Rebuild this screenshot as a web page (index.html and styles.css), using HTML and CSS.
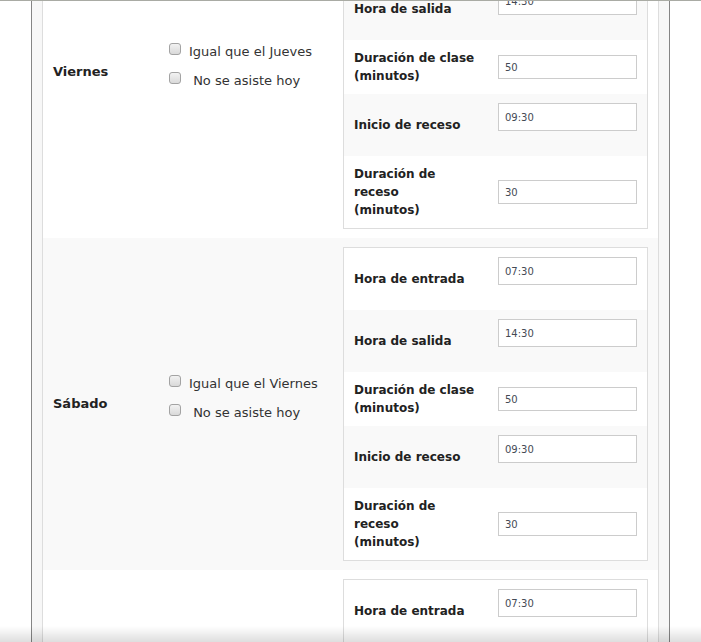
FILE: index.html
```html
<!DOCTYPE html>
<html lang="es">
<head>
<meta charset="utf-8">
<title>Horario</title>
<link rel="stylesheet" href="styles.css">
</head>
<body>
<div class="topline"></div>
<div class="frame">
  <div class="panel">
    <div class="day-row">
      <div class="day-name">Viernes</div>
      <div class="day-opts">
        <label class="chk"><input type="checkbox"><span>Igual que el Jueves</span></label>
        <label class="chk"><input type="checkbox"><span>&nbsp;No se asiste hoy</span></label>
      </div>
      <div class="day-times">
        <div class="times">
          <div class="trow"><div class="tlabel">Hora de entrada</div><div class="tinput"><input class="time" type="text" value="07:30"></div></div>
          <div class="trow alt"><div class="tlabel">Hora de salida</div><div class="tinput"><input class="time" type="text" value="14:30"></div></div>
          <div class="trow"><div class="tlabel">Duración de clase<br>(minutos)</div><div class="tinput"><input class="num" type="text" value="50"></div></div>
          <div class="trow alt"><div class="tlabel">Inicio de receso</div><div class="tinput"><input class="time" type="text" value="09:30"></div></div>
          <div class="trow"><div class="tlabel">Duración de<br>receso<br>(minutos)</div><div class="tinput"><input class="num" type="text" value="30"></div></div>
        </div>
      </div>
    </div>
    <div class="day-row shaded">
      <div class="day-name">Sábado</div>
      <div class="day-opts">
        <label class="chk"><input type="checkbox"><span>Igual que el Viernes</span></label>
        <label class="chk"><input type="checkbox"><span>&nbsp;No se asiste hoy</span></label>
      </div>
      <div class="day-times">
        <div class="times">
          <div class="trow"><div class="tlabel">Hora de entrada</div><div class="tinput"><input class="time" type="text" value="07:30"></div></div>
          <div class="trow alt"><div class="tlabel">Hora de salida</div><div class="tinput"><input class="time" type="text" value="14:30"></div></div>
          <div class="trow"><div class="tlabel">Duración de clase<br>(minutos)</div><div class="tinput"><input class="num" type="text" value="50"></div></div>
          <div class="trow alt"><div class="tlabel">Inicio de receso</div><div class="tinput"><input class="time" type="text" value="09:30"></div></div>
          <div class="trow"><div class="tlabel">Duración de<br>receso<br>(minutos)</div><div class="tinput"><input class="num" type="text" value="30"></div></div>
        </div>
      </div>
    </div>
    <div class="day-row">
      <div class="day-name">Domingo</div>
      <div class="day-opts">
        <label class="chk"><input type="checkbox"><span>Igual que el Sábado</span></label>
        <label class="chk"><input type="checkbox"><span>&nbsp;No se asiste hoy</span></label>
      </div>
      <div class="day-times">
        <div class="times">
          <div class="trow"><div class="tlabel">Hora de entrada</div><div class="tinput"><input class="time" type="text" value="07:30"></div></div>
          <div class="trow alt"><div class="tlabel">Hora de salida</div><div class="tinput"><input class="time" type="text" value="14:30"></div></div>
          <div class="trow"><div class="tlabel">Duración de clase<br>(minutos)</div><div class="tinput"><input class="num" type="text" value="50"></div></div>
          <div class="trow alt"><div class="tlabel">Inicio de receso</div><div class="tinput"><input class="time" type="text" value="09:30"></div></div>
          <div class="trow"><div class="tlabel">Duración de<br>receso<br>(minutos)</div><div class="tinput"><input class="num" type="text" value="30"></div></div>
        </div>
      </div>
    </div>
  </div>
</div>
<div class="bottomshade"></div>
</body>
</html>
```
FILE: styles.css
```css
html, body {
  margin: 0;
  padding: 0;
  background: #ffffff;
  font-family: "DejaVu Sans", Verdana, sans-serif;
  color: #222222;
}

.topline {
  position: fixed;
  top: 0;
  left: 0;
  right: 0;
  height: 1px;
  background: #a9aba4;
  z-index: 5;
}

.bottomshade {
  position: fixed;
  left: 0;
  right: 0;
  bottom: 0;
  height: 16px;
  background: linear-gradient(to bottom, rgba(0,0,0,0), rgba(0,0,0,0.13));
  z-index: 5;
}

.frame {
  width: 639px;
  box-sizing: border-box;
  margin: -94px auto 0;
  border-left: 1px solid #858585;
  border-right: 1px solid #858585;
  background: #f7f7f7;
  padding: 0 10px;
}

.panel {
  border-left: 1px solid #dddddd;
  border-right: 1px solid #dddddd;
  background: #ffffff;
}

.day-row {
  display: grid;
  grid-template-columns: 116px 174px 325px;
  align-items: center;
  background: #ffffff;
}

.day-row.shaded {
  background: #f9f9f9;
}

.day-name {
  padding: 0 10px;
  font-weight: bold;
  font-size: 13px;
  line-height: 18px;
  color: #222222;
}

.day-opts {
  padding: 0 10px;
  display: flex;
  flex-direction: column;
  gap: 9px;
  margin-bottom: 11px;
}

.chk {
  display: flex;
  align-items: flex-start;
  height: 20px;
  font-size: 13px;
  line-height: 20px;
  color: #333333;
}

.chk input {
  appearance: none;
  -webkit-appearance: none;
  width: 12px;
  height: 12px;
  margin: 1px 8px 0 0;
  box-sizing: border-box;
  border: 1px solid #a3a3a3;
  border-radius: 3px;
  background: linear-gradient(to bottom, #f2f2f2, #d9d9d9);
}

.day-times {
  padding: 9px 10px 9px 10px;
}

.times {
  border: 1px solid #dddddd;
  background: #ffffff;
}

.trow {
  display: grid;
  grid-template-columns: 144px 159px;
  align-items: center;
  background: #ffffff;
}

.trow.alt {
  background: #f9f9f9;
}

.tlabel {
  padding: 9px 10px;
  font-weight: bold;
  font-size: 12px;
  line-height: 18px;
  color: #222222;
}

.tinput {
  padding: 9px 10px;
}

.tinput input {
  display: block;
  width: 139px;
  box-sizing: border-box;
  margin: 0;
  border: 1px solid #cccccc;
  background: #ffffff;
  padding: 0 6px;
  font-family: "DejaVu Sans", Verdana, sans-serif;
  font-size: 10px;
  color: #444a55;
  outline: none;
}

.tinput input.time {
  height: 28px;
  margin-bottom: 16px;
}

.tinput input.num {
  height: 24px;
}
```
